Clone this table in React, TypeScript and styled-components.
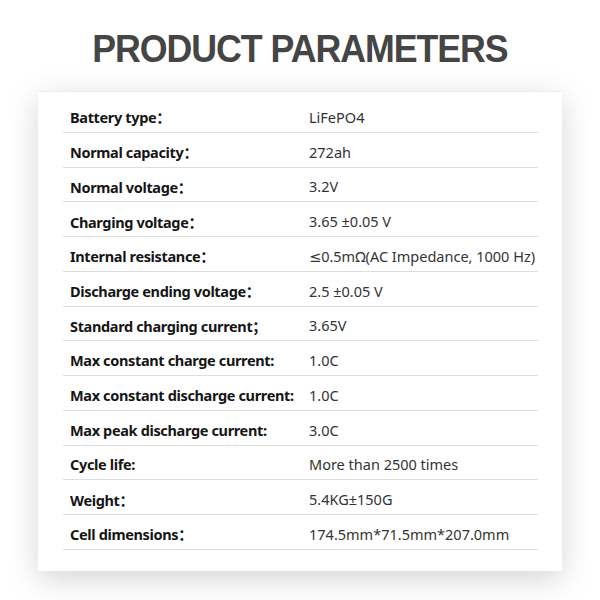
import styled, { createGlobalStyle } from "styled-components";

const GlobalStyle = createGlobalStyle`
  body {
    margin: 0;
    background: #fff;
  }
`;

const Page = styled.div`
  width: 600px;
  height: 600px;
  padding-top: 30px;
  box-sizing: border-box;
  display: flex;
  flex-direction: column;
  align-items: center;
  overflow: hidden;
`;

const Title = styled.h1`
  margin: 0;
  font-family: "Liberation Sans", Arial, sans-serif;
  font-weight: 700;
  font-size: 38px;
  line-height: 38px;
  letter-spacing: -1.1px;
  color: #454545;
  transform: scaleX(0.94);
  white-space: nowrap;
`;

const Card = styled.div`
  width: 524px;
  margin-top: 23px;
  padding: 6px 24px 21px 25px;
  box-sizing: border-box;
  background: #fff;
  border-top: 1px solid #ececec;
  box-shadow: 0 8px 30px rgba(0, 0, 0, 0.17);
`;

const Row = styled.div`
  display: grid;
  grid-template-columns: 239px 1fr;
  align-items: center;
  height: 34.75px;
  padding: 4px 0 0 7px;
  box-sizing: border-box;
  border-bottom: 1px solid #dedede;
  font-family: "Noto Sans", "DejaVu Sans", "Noto Sans CJK SC", sans-serif;
  font-size: 14.5px;
  white-space: nowrap;
`;

const Label = styled.span`
  font-weight: 700;
  letter-spacing: -0.35px;
  color: #151515;
`;

const Value = styled.span`
  font-weight: 400;
  color: #333;
`;

const params: [string, string][] = [
  ["Battery type：", "LiFePO4"],
  ["Normal capacity：", "272ah"],
  ["Normal voltage：", "3.2V"],
  ["Charging voltage：", "3.65 ±0.05 V"],
  ["Internal resistance：", "≤0.5mΩ(AC Impedance, 1000 Hz)"],
  ["Discharge ending voltage：", "2.5 ±0.05 V"],
  ["Standard charging current；", "3.65V"],
  ["Max constant charge current:", "1.0C"],
  ["Max constant discharge current:", "1.0C"],
  ["Max peak discharge current:", "3.0C"],
  ["Cycle life:", "More than 2500 times"],
  ["Weight：", "5.4KG±150G"],
  ["Cell dimensions：", "174.5mm*71.5mm*207.0mm"],
];

const App = () => {
  return (
    <>
      <GlobalStyle />
      <Page>
        <Title>PRODUCT PARAMETERS</Title>
        <Card>
          {params.map(([label, value]) => (
            <Row key={label}>
              <Label>{label}</Label>
              <Value>{value}</Value>
            </Row>
          ))}
        </Card>
      </Page>
    </>
  );
};

export default App;
